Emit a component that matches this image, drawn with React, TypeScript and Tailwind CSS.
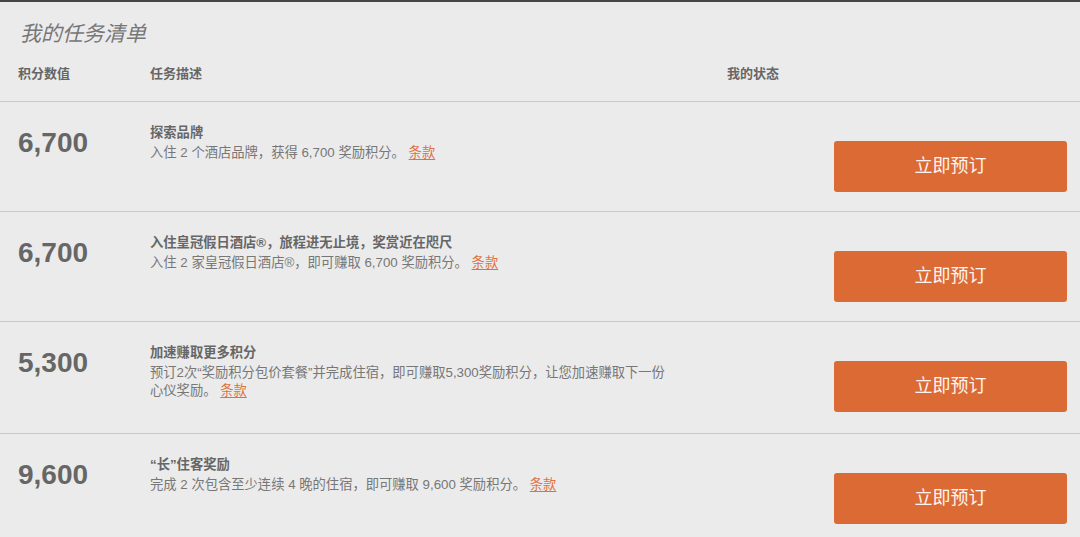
const font = { fontFamily: '"Liberation Sans", "Noto Sans CJK SC", sans-serif' };

type Task = {
  points: string;
  title: string;
  desc: string;
  extra?: string;
};

const tasks: Task[] = [
  {
    points: "6,700",
    title: "探索品牌",
    desc: "入住 2 个酒店品牌，获得 6,700 奖励积分。",
  },
  {
    points: "6,700",
    title: "入住皇冠假日酒店®，旅程进无止境，奖赏近在咫尺",
    desc: "入住 2 家皇冠假日酒店®，即可赚取 6,700 奖励积分。",
  },
  {
    points: "5,300",
    title: "加速赚取更多积分",
    desc: "预订2次“奖励积分包价套餐”并完成住宿，即可赚取5,300奖励积分，让您加速赚取下一份心仪奖励。",
    extra: "pb-[21px]",
  },
  {
    points: "9,600",
    title: "“长”住客奖励",
    desc: "完成 2 次包含至少连续 4 晚的住宿，即可赚取 9,600 奖励积分。",
  },
];

function TaskRow({ task }: { task: Task }) {
  return (
    <div
      className={
        "grid grid-cols-[132px_577px_1fr] border-t border-[#c9c9c9] pl-[18px] pr-[13px] " +
        (task.extra ?? "pb-[19px]")
      }
    >
      <div className="pt-[23px] text-[28px] font-bold leading-[36px] text-[#666]">{task.points}</div>
      <div className="pt-[22px] text-[13.3px] leading-[18px]">
        <div className="font-bold text-[#666]">{task.title}</div>
        <p className="mt-[2px] max-w-[522px] text-[#777]">
          {task.desc}{" "}
          <a href="#" className="text-[#e0703f] underline underline-offset-2">
            条款
          </a>
        </p>
      </div>
      <div className="flex justify-end pt-[39px]">
        <button className="h-[51px] w-[233px] rounded-[3px] bg-[#dc6a35] text-[18px] text-[#fff5ee]">
          立即预订
        </button>
      </div>
    </div>
  );
}

export default function App() {
  return (
    <div className="min-h-screen border-t-2 border-[#454545] bg-[#ebebeb]" style={font}>
      <h1 className="pl-[20px] pt-[18px] text-[21px] font-normal italic leading-[28px] text-[#777]">
        我的任务清单
      </h1>
      <div className="grid grid-cols-[132px_577px_1fr] pb-[18px] pl-[18px] pt-[17px] text-[13px] font-bold leading-[18px] text-[#666]">
        <div>积分数值</div>
        <div>任务描述</div>
        <div>我的状态</div>
      </div>
      {tasks.map((t, i) => (
        <TaskRow key={i} task={t} />
      ))}
    </div>
  );
}
